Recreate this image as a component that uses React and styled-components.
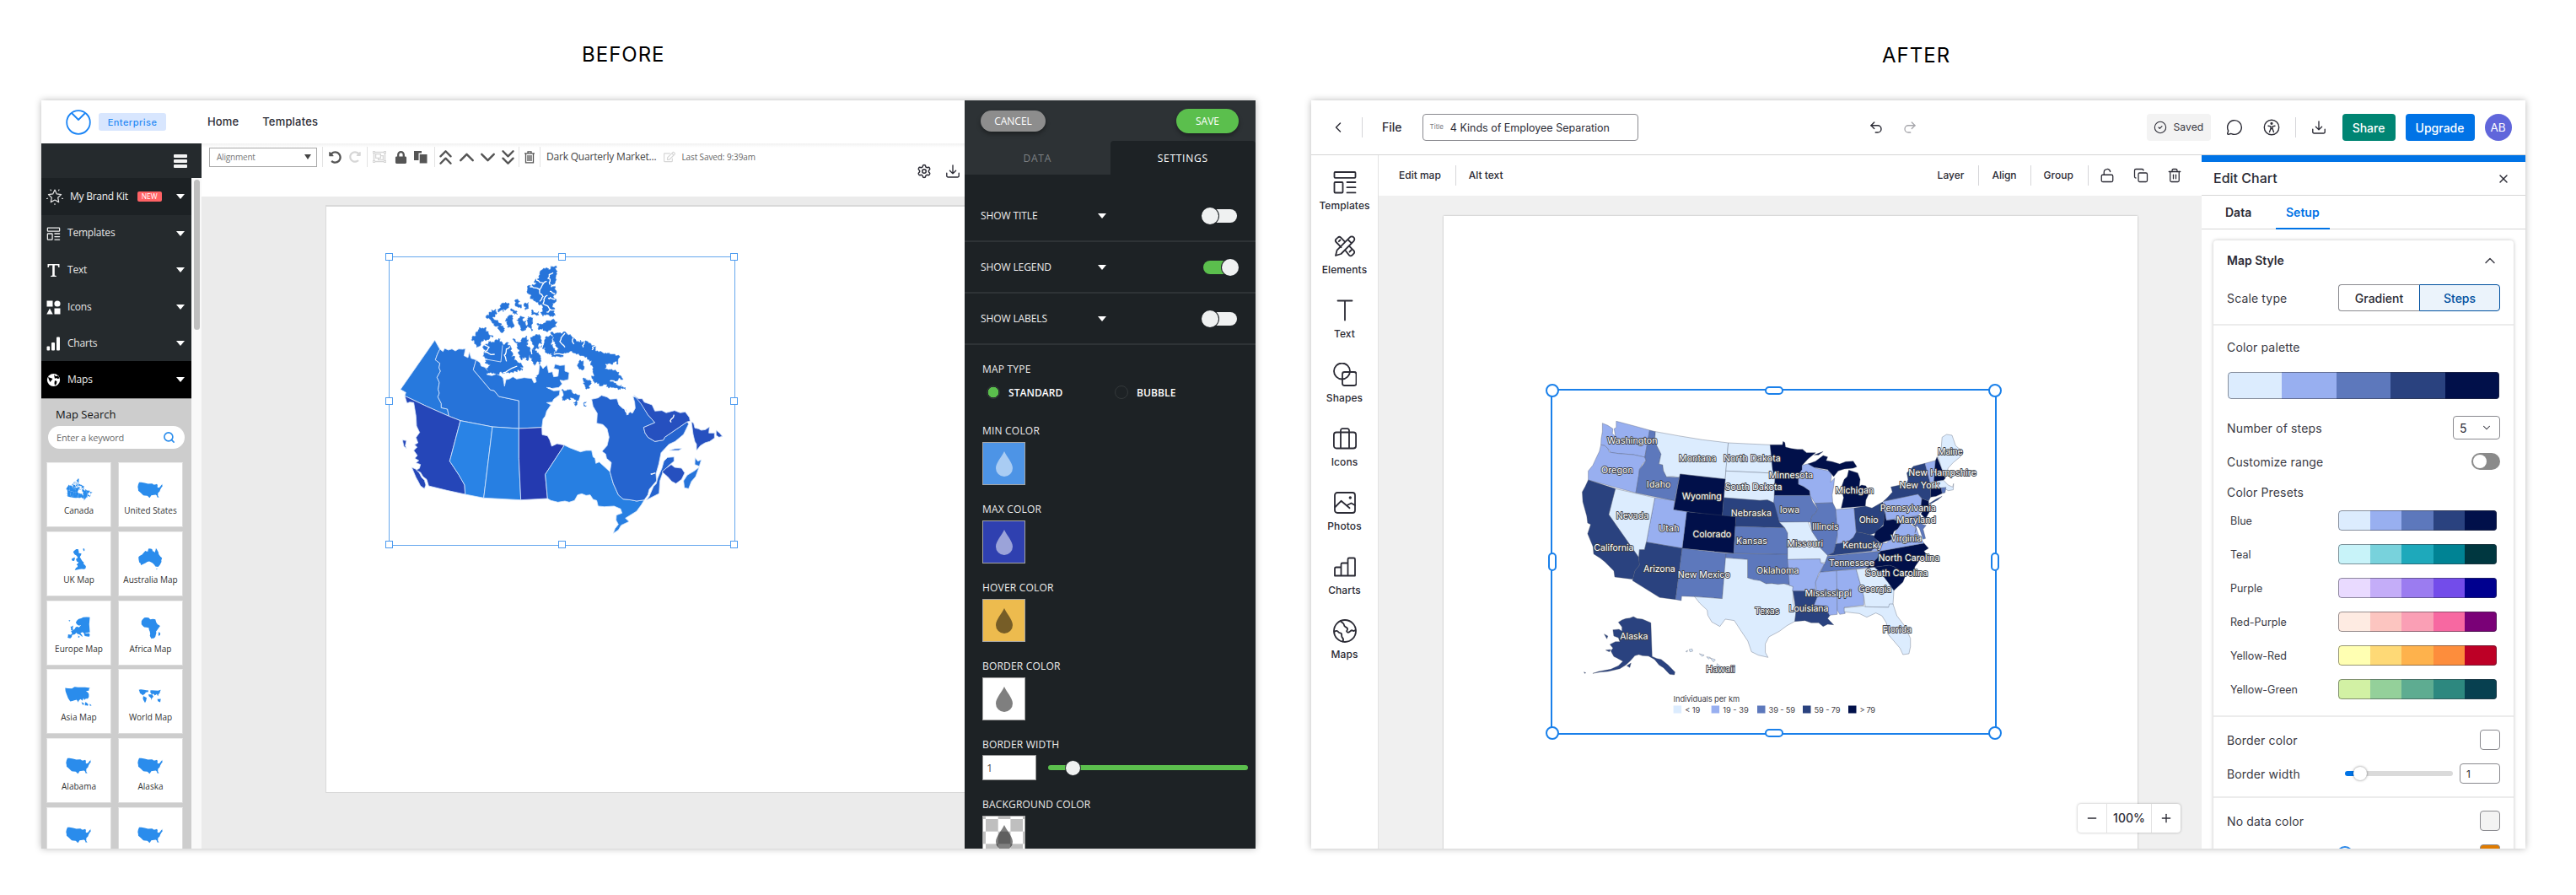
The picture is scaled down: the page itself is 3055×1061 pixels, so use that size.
import React from "react";
import styled, { createGlobalStyle, css } from "styled-components";
import {
  Undo2, Redo2, Trash2, Copy, MessageCircle, X, ChevronLeft, ChevronDown, ChevronUp,
  ChevronsUp, ChevronsDown, LockOpen, CircleCheck, Settings, Plus, Minus, Search,
} from "lucide-react";
import { FaLock, FaUndoAlt, FaRedoAlt, FaRegEdit, FaRegObjectGroup } from "react-icons/fa";

const Global = createGlobalStyle`
  * { box-sizing: border-box; }
  html, body { margin: 0; padding: 0; background: #fff; }
  body { font-family: Inter, "Liberation Sans", sans-serif; width: 3055px; height: 1061px; overflow: hidden; }
  svg { display: block; flex: none; }
`;

const INK = "#2b2b35";
const OPEN = `"Open Sans", "Noto Sans", sans-serif`;

/* ---------- shared ---------- */
const Board = styled.div`
  display: flex;
  gap: 66px;
  height: 1061px;
  padding-left: 49px;
`;
const Column = styled.section`
  width: 1440px;
  display: flex;
  flex-direction: column;
`;
const Heading = styled.div`
  height: 119px;
  padding: ${(p) => p.$pad};
  font-size: 24px;
  line-height: 30px;
  letter-spacing: ${(p) => p.$ls || "1px"};
  color: #000;
`;
const Frame = styled.div`
  width: 1440px;
  height: 887px;
  background: #fff;
  box-shadow: 0 0 8px rgba(0, 0, 0, 0.28);
  overflow: hidden;
  display: flex;
  flex-direction: ${(p) => (p.$column ? "column" : "row")};
`;
const Txt = styled.span`
  font-size: ${(p) => p.$size || 14}px;
  font-weight: ${(p) => p.$weight || 400};
  letter-spacing: ${(p) => p.$ls || 0}px;
  color: ${(p) => p.$color || INK};
  margin-left: ${(p) => p.$ml || 0}px;
  white-space: nowrap;
  line-height: 1.2;
`;
const Caret = styled.i`
  width: 0;
  height: 0;
  border-left: ${(p) => p.$w || 5}px solid transparent;
  border-right: ${(p) => p.$w || 5}px solid transparent;
  border-top: 6px solid ${(p) => p.$color || "#fff"};
  margin-left: ${(p) => p.$ml || "0"};
`;

/* ---------- before: shell ---------- */
const BMain = styled.div`
  width: 1095px;
  display: flex;
  flex-direction: column;
  font-family: ${OPEN};
`;
const BHeader = styled.header`
  height: 51px;
  display: flex;
  align-items: center;
  padding-left: 29px;
  font-family: Inter, sans-serif;
`;
const Badge = styled.span`
  margin-left: 9px;
  width: 80px;
  height: 21px;
  border-radius: 3px;
  background: #d8e6fe;
  color: #2a8bf5;
  font-size: 11px;
  font-weight: 500;
  letter-spacing: 0.45px;
  display: flex;
  align-items: center;
  justify-content: center;
`;
const BBody = styled.div`
  flex: 1;
  min-height: 0;
  display: flex;
`;
const BSidebar = styled.aside`
  width: 190px;
  background: #252a2d;
  display: flex;
  flex-direction: column;
`;
const BSideTop = styled.div`
  height: 41px;
  display: flex;
  align-items: center;
  justify-content: flex-end;
  padding-right: 17px;
`;
const Burger = styled.div`
  width: 16px;
  display: flex;
  flex-direction: column;
  gap: 2px;
  i { height: 4px; background: #f3f3f3; border-radius: 1px; }
`;
const BSideRow = styled.div`
  display: flex;
  flex: 1;
  min-height: 0;
`;
const BMenu = styled.div`
  width: 178px;
  display: flex;
  flex-direction: column;
`;
const ScrollTrack = styled.div`
  width: 12px;
  background: #f9f9f9;
  padding: 2px 2px 0 3px;
`;
const ScrollThumb = styled.div`
  width: 7px;
  height: 178px;
  border-radius: 4px;
  background: #bfbfbf;
`;
const MenuItem = styled.div`
  height: ${(p) => p.$h}px;
  flex: none;
  display: flex;
  align-items: center;
  padding: 0 8px 0 6px;
  background: ${(p) => p.$bg || "transparent"};
  svg { width: ${(p) => p.$iw || 17}px; }
`;
const NewTag = styled.span`
  margin-left: 11px;
  width: 29px;
  height: 12px;
  border-radius: 2px;
  background: #ff6265;
  color: #fff;
  font-size: 8.5px;
  line-height: 12px;
  text-align: center;
`;
const MapLib = styled.div`
  flex: 1;
  min-height: 0;
  overflow: hidden;
  background: #cdcdcd;
  border-top: 1px solid #8e8e8e;
  display: flex;
  flex-direction: column;
`;
const LibTitle = styled.div`
  height: 32px;
  flex: none;
  padding: 9px 0 0 17px;
  font-size: 13px;
  line-height: 18px;
  letter-spacing: 0;
  color: #111;
`;
const SearchField = styled.div`
  width: 162px;
  height: 27px;
  flex: none;
  margin-left: 8px;
  padding: 0 11px 0 10px;
  border-radius: 14px;
  background: #fff;
  display: flex;
  align-items: center;
  justify-content: space-between;
  font-size: 11px;
  letter-spacing: -0.2px;
  color: #6c6c6c;
`;
const Cards = styled.div`
  margin: 16px 0 0 6px;
  display: grid;
  grid-template-columns: 77px 77px;
  column-gap: 8px;
  row-gap: 4.8px;
  flex: none;
`;
const MapCard = styled.div`
  height: 77px;
  background: #fff;
  border: 1px solid #dcdcdc;
  border-top-color: #eee;
  display: flex;
  flex-direction: column;
  align-items: center;
  svg { margin-top: 18px; }
  span { margin-top: 4px; font-size: 10px; line-height: 14px; color: #333; white-space: nowrap; }
`;
const BWork = styled.div`
  flex: 1;
  display: flex;
  flex-direction: column;
  min-width: 0;
`;
const BToolbar = styled.div`
  height: 63px;
  display: flex;
  padding-left: 9px;
  background: linear-gradient(#f1f1f1, #fff 5px);
`;
const BTools = styled.div`
  height: 32px;
  display: flex;
  align-items: center;
  color: #555;
`;
const SelectBox = styled.div`
  width: 128px;
  height: 23px;
  border: 1px solid #a9a9a9;
  background: #fff;
  display: flex;
  align-items: center;
  justify-content: space-between;
  padding: 0 6px 0 8px;
  font-size: 10px;
  letter-spacing: -0.2px;
  color: #777;
`;
const ToolSep = styled.i`
  width: 1px;
  height: 24px;
  background: #e3e3e3;
  margin-left: ${(p) => p.$ml}px;
`;
const Tool = styled.span`
  width: 20px;
  height: 20px;
  margin-left: ${(p) => p.$ml}px;
  display: flex;
  align-items: center;
  justify-content: center;
  color: ${(p) => (p.$off ? "#d6d6d6" : "#555")};
`;
const BActions = styled.div`
  margin-left: auto;
  padding: 24px 5px 0 0;
  display: flex;
  gap: 16px;
`;
const BCanvas = styled.div`
  flex: 1;
  background: #ebebeb;
  padding: 10px 0 66px 147px;
`;
const BPage = styled.div`
  position: relative;
  height: 697px;
  background: #fff;
  border: 1px solid #d9d9d9;
  border-right: none;
  border-top-width: 2px;
`;

/* ---------- before: settings panel ---------- */
const BPanel = styled.aside`
  width: 345px;
  background: #1d2225;
  font-family: ${OPEN};
  color: #eee;
  overflow: hidden;
`;
const PanelTop = styled.div`
  height: 48px;
  background: #2d3235;
  display: flex;
  align-items: center;
  justify-content: space-between;
  padding: 0 20px 0 19px;
`;
const Pill = styled.span`
  width: ${(p) => p.$w}px;
  height: ${(p) => p.$h}px;
  border-radius: 15px;
  background: ${(p) => p.$bg};
  box-shadow: 0 3px 5px rgba(0, 0, 0, 0.35);
  font-size: 12px;
  letter-spacing: 0;
  color: #fff;
  display: flex;
  align-items: center;
  justify-content: center;
`;
const PanelTabs = styled.div`
  height: 40px;
  background: #2d3235;
  display: flex;
`;
const PanelTab = styled.div`
  width: 172.5px;
  display: flex;
  align-items: center;
  justify-content: center;
  font-size: 12px;
  letter-spacing: 0.75px;
  color: ${(p) => (p.$on ? "#fff" : "#7d8184")};
  background: ${(p) => (p.$on ? "#1d2225" : "transparent")};
  border-radius: 4px 4px 0 0;
`;
const ToggleList = styled.div`
  padding-top: 19px;
`;
const ToggleRow = styled.div`
  height: 61px;
  padding: 0 22px 0 19px;
  border-bottom: 2px solid #2e3336;
  display: flex;
  align-items: center;
`;
const RowName = styled.span`
  width: 139px;
  font-size: 12px;
  letter-spacing: -0.1px;
`;
const Switch = styled.span`
  margin-left: auto;
  width: 40px;
  height: 16px;
  border-radius: 8px;
  background: ${(p) => (p.$on ? "#5bbf4d" : "#eff1f1")};
  display: flex;
  align-items: center;
  justify-content: ${(p) => (p.$on ? "flex-end" : "flex-start")};
  i {
    flex: none;
    width: 20px;
    height: 20px;
    border-radius: 50%;
    background: #eff1f1;
    box-shadow: 0 0 0 1px #1d2225;
    margin: 0 ${(p) => (p.$on ? "-2px 0 0" : "0 0 -2px")};
  }
`;
const PanelForm = styled.div`
  padding: 20px 9px 0 21px;
`;
const PanelLabel = styled.div`
  height: 18px;
  margin-top: ${(p) => p.$mt || 0}px;
  font-size: 12px;
  line-height: 18px;
  letter-spacing: ${(p) => p.$ls || 0.2}px;
`;
const Radios = styled.div`
  margin-top: 8px;
  height: 20px;
  display: flex;
`;
const Radio = styled.div`
  width: 152px;
  padding-left: 5px;
  display: flex;
  align-items: center;
  gap: 10px;
  font-size: 12px;
  font-weight: 600;
  letter-spacing: ${(p) => (p.$on ? 0.05 : 0.1)}px;
  color: #fff;
  i {
    width: 16px;
    height: 16px;
    border-radius: 50%;
    border: 1px solid #34393b;
    background: ${(p) => (p.$on ? "radial-gradient(#5bbf4d 6px, #1d2225 6.6px)" : "transparent")};
  }
`;
const Swatch = styled.div`
  width: 51px;
  height: 51px;
  margin-top: 4px;
  border: 1px solid #a5a5a5;
  background: ${(p) => p.$bg};
  ${(p) => p.$checker && css`background-position: 3px 3px; background-size: 29.4px 29.4px;`}
  display: flex;
  align-items: center;
  justify-content: center;
`;
const WidthRow = styled.div`
  margin-top: 3px;
  height: 30px;
  display: flex;
  align-items: center;
  gap: 14px;
`;
const WidthInput = styled.div`
  width: 64px;
  height: 30px;
  background: #fff;
  border: 1px solid #999;
  color: #555;
  font-size: 13px;
  line-height: 28px;
  padding-left: 4px;
`;
const GreenRail = styled.div`
  width: 237px;
  height: 6px;
  border-radius: 3px;
  background: #5bbf4d;
  display: flex;
  align-items: center;
  padding-left: 20px;
  i { flex: none; width: 19px; height: 19px; border-radius: 50%; background: #eff1f1; border: 1px solid #1d2225; }
`;

/* ---------- selection handles (items on the free canvas) ---------- */
const OldSelection = styled.div`
  position: absolute;
  left: 74px;
  top: 59px;
  width: 411px;
  height: 343px;
  border: 1px solid #66a8ee;
`;
const OldHandle = styled.i`
  position: absolute;
  left: ${(p) => p.$x};
  top: ${(p) => p.$y};
  width: 9px;
  height: 9px;
  margin: -5px 0 0 -5px;
  background: #fff;
  border: 1px solid #4d9bf0;
`;
const MapLayer = styled.svg`
  position: absolute;
  left: ${(p) => p.$x}px;
  top: ${(p) => p.$y}px;
`;
const NewSelection = styled.div`
  position: absolute;
  left: 127px;
  top: 205px;
  width: 529px;
  height: 410px;
  border: 2px solid #1a80ea;
`;
const NewHandle = styled.i`
  position: absolute;
  left: ${(p) => p.$x};
  top: ${(p) => p.$y};
  width: ${(p) => p.$w}px;
  height: ${(p) => p.$h}px;
  transform: translate(-50%, -50%);
  background: #fff;
  border: 2px solid #1a80ea;
  border-radius: 8px;
`;

/* ---------- after: shell ---------- */
const AHeader = styled.header`
  height: 65px;
  border-bottom: 1px solid #d6d6d6;
  display: flex;
  align-items: center;
`;
const Sep = styled.i`
  width: 1px;
  height: 24px;
  background: #d6d6d9;
  margin-left: ${(p) => p.$ml}px;
`;
const Ico = styled.span`
  margin-left: ${(p) => p.$ml}px;
  color: ${(p) => p.$color || INK};
`;
const TitleInput = styled.div`
  margin-left: 24px;
  width: 256px;
  height: 32px;
  border: 1px solid #8a8a8f;
  border-radius: 4px;
  padding-left: 8px;
  display: flex;
  align-items: center;
`;
const SavedChip = styled.div`
  margin-left: 272px;
  width: 76px;
  height: 32px;
  border-radius: 4px;
  background: #f3f3f3;
  display: flex;
  align-items: center;
  padding-left: 8px;
`;
const Button = styled.div`
  margin-left: ${(p) => p.$ml}px;
  width: ${(p) => p.$w}px;
  height: 32px;
  border-radius: 4px;
  background: ${(p) => p.$bg};
  color: #fff;
  font-size: 14px;
  font-weight: 500;
  display: flex;
  align-items: center;
  justify-content: center;
`;
const Avatar = styled.div`
  margin-left: 12px;
  width: 32px;
  height: 32px;
  border-radius: 50%;
  background: #6066db;
  color: #fff;
  font-size: 13.5px;
  display: flex;
  align-items: center;
  justify-content: center;
`;
const ABody = styled.div`
  flex: 1;
  min-height: 0;
  display: flex;
`;
const ASidebar = styled.nav`
  width: 80px;
  border-right: 1px solid #e2e2e2;
  padding-top: 18px;
`;
const NavItem = styled.div`
  height: 76px;
  display: flex;
  flex-direction: column;
  align-items: center;
  color: ${INK};
  font-size: 12px;
  font-weight: 500;
  letter-spacing: 0.1px;
  svg { width: 28px; height: 28px; fill: none; stroke: currentColor; stroke-width: 1.8; stroke-linejoin: round; stroke-linecap: round; }
  span { margin-top: 6px; line-height: 15px; }
`;
const AWork = styled.div`
  width: 976px;
  display: flex;
  flex-direction: column;
`;
const AToolbar = styled.div`
  height: 48px;
  flex: none;
  display: flex;
  align-items: center;
`;
const ACanvas = styled.div`
  position: relative;
  flex: 1;
  background: #f0f0f0;
  padding: 24px 76px 0 77px;
  overflow: hidden;
`;
const APage = styled.div`
  position: relative;
  height: 900px;
  background: #fff;
  box-shadow: 0 0 2px rgba(0, 0, 0, 0.3);
`;
const ZoomBox = styled.div`
  position: absolute;
  left: 829px;
  top: 721px;
  width: 122px;
  height: 34px;
  background: #fff;
  border-radius: 4px;
  box-shadow: 0 0 3px rgba(0, 0, 0, 0.3);
  display: grid;
  grid-template-columns: 34px 54px 34px;
  align-items: center;
  justify-items: center;
  color: ${INK};
  span { width: 54px; text-align: center; border: solid #e2e2e2; border-width: 0 1px; line-height: 34px; font-size: 14px; font-weight: 500; }
`;

/* ---------- after: edit chart panel ---------- */
const APanel = styled.aside`
  width: 384px;
  display: flex;
  flex-direction: column;
  border-top: 8px solid #0073e6;
  background: #fff;
`;
const PanelTitle = styled.div`
  height: 40px;
  flex: none;
  border-bottom: 1px solid #d6d6d6;
  display: flex;
  align-items: center;
  justify-content: space-between;
  padding: 0 18px 0 14px;
`;
const Tabs = styled.div`
  height: 40px;
  flex: none;
  border-bottom: 1px solid #d6d6d6;
  display: flex;
  padding-left: 24px;
`;
const Tab = styled.div`
  width: 64px;
  height: 40px;
  border-bottom: 2px solid ${(p) => (p.$on ? "#0073e6" : "transparent")};
  color: ${(p) => (p.$on ? "#0073e6" : INK)};
  font-size: 14px;
  font-weight: 600;
  line-height: 39px;
  padding-left: ${(p) => (p.$on ? 12 : 4)}px;
`;
const PanelBody = styled.div`
  flex: 1;
  min-height: 0;
  overflow: hidden;
  padding: 13px 14px 0;
`;
const Card = styled.div`
  height: 760px;
  border-radius: 4px;
  box-shadow: 0 0 4px rgba(0, 0, 0, 0.25);
`;
const Section = styled.div`
  padding: 0 16px ${(p) => p.$pb || 0}px;
  border-bottom: 2px solid #ececec;
`;
const Field = styled.div`
  height: ${(p) => p.$h}px;
  margin-top: ${(p) => p.$mt || 0}px;
  padding: 0 ${(p) => p.$pad || 0}px;
  display: flex;
  align-items: center;
  justify-content: space-between;
  font-size: ${(p) => p.$size || 14}px;
  letter-spacing: ${(p) => (p.$size ? 0 : 0.15)}px;
  white-space: nowrap;
  color: #3a3a44;
`;
const CardHead = styled(Field)`
  padding-right: 2px;
`;
const Segments = styled.div`
  display: flex;
  width: 192px;
`;
const Segment = styled.div`
  width: 96px;
  height: 32px;
  border: 1px solid ${(p) => (p.$on ? "#00509f" : "#8a8a8f")};
  border-right-width: ${(p) => (p.$on ? 1 : 0)}px;
  border-radius: ${(p) => (p.$on ? "0 4px 4px 0" : "4px 0 0 4px")};
  background: ${(p) => (p.$on ? "#ebf3fb" : "#fff")};
  color: ${(p) => (p.$on ? "#00509f" : INK)};
  font-weight: 500;
  letter-spacing: 0;
  display: flex;
  align-items: center;
  justify-content: center;
`;
const Ramp = styled.div`
  width: ${(p) => p.$w}px;
  height: ${(p) => p.$h}px;
  margin: ${(p) => p.$m || 0};
  position: relative;
  display: flex;
  border-radius: 4px;
  overflow: hidden;
  &::after { content: ""; position: absolute; inset: 0; border: 1px solid rgba(50, 50, 60, 0.5); border-radius: 4px; }
`;
const RampCell = styled.i`
  flex: 1;
  background: ${(p) => p.$c};
`;
const Box = styled.div`
  width: ${(p) => p.$w}px;
  height: ${(p) => p.$h}px;
  border: 1px solid #8a8a8f;
  border-radius: 4px;
  background: ${(p) => p.$bg || "#fff"};
  padding: 0 8px 0 7px;
  display: flex;
  align-items: center;
  justify-content: space-between;
  color: ${INK};
  font-size: ${(p) => p.$size || 14}px;
`;
const GreySwitch = styled.div`
  width: 34px;
  height: 20px;
  border-radius: 10px;
  background: #8a8a8a;
  padding: 2px;
  i { display: block; width: 16px; height: 16px; border-radius: 50%; background: #fff; }
`;
const SliderRow = styled.div`
  display: flex;
  align-items: center;
  gap: 8px;
`;
const Rail = styled.div`
  width: 128px;
  height: 6px;
  border-radius: 3px;
  background: linear-gradient(90deg, #0073e6 16px, #dadada 16px);
  display: flex;
  align-items: center;
  padding-left: 10px;
  i { flex: none; width: 16px; height: 16px; border-radius: 50%; background: #fff; box-shadow: 0 0 3px rgba(0, 0, 0, 0.5); }
`;
const InfoRing = styled.i`
  width: 20px;
  height: 20px;
  margin: 0 auto 0 8px;
  border: 2px solid #2a87e8;
  border-radius: 50%;
`;

/* ---------- map geometry ---------- */
const rough = (pts, amp, depth = 3, closed = true) => {
  let p = pts.split(" ").map((s) => s.split(",").map(Number));
  let seed = 7 + Math.round(p[0][0]);
  const rnd = () => {
    seed = (seed * 16807) % 2147483647;
    return seed / 2147483647 - 0.5;
  };
  let a = amp;
  for (let d = 0; d < depth; d++) {
    const out = [];
    p.forEach((q, i) => {
      out.push(q);
      if (!closed && i === p.length - 1) return;
      const n = p[(i + 1) % p.length];
      const len = Math.hypot(n[0] - q[0], n[1] - q[1]);
      if (len > 5) {
        const k = Math.min(a, len * 0.5);
        out.push([(q[0] + n[0]) / 2 + rnd() * k * 2, (q[1] + n[1]) / 2 + rnd() * k * 2]);
      }
    });
    p = out;
    a *= 0.75;
  }
  return p.map((q) => q.map((v) => v.toFixed(1)).join(",")).join(" ");
};

const CANADA = [
  ["#2779dd", "227,370 245,402 236,420 229,440 245,452 242,468 247,480 235,502 243,520 239,545 243,558 238,572 250,595 250,610 272,615 277,640 200,606 120,568 124,556 105,545 112,535"],
  ["#2673d9", "245,402 256,410 262,399 275,405 288,401 300,408 312,401 326,402 336,400 331,425 345,432 350,412 356,434 374,440 364,475 425,547 438,549 455,570 526,585 526,684 432,678 318,656 277,640 272,615 250,610 250,595 238,572 243,558 239,545 243,520 235,502 247,480 242,468 245,452 229,440 236,420"],
  ["#2674da", "374,440 388,450 392,462 405,466 418,482 412,492 430,496 446,490 462,497 470,505 475,534 480,510 492,508 505,500 518,508 545,503 572,506 580,522 588,518 584,500 596,490 600,455 612,470 626,458 632,485 645,482 650,500 665,498 668,475 650,470 655,455 672,460 690,458 690,480 705,485 702,510 685,514 672,512 680,525 668,538 640,542 625,538 650,550 672,548 670,565 650,580 645,590 625,592 640,600 625,622 620,640 612,650 608,680 526,684 526,585 455,570 438,549 425,547 364,475"],
  ["#2546b8", "120,568 200,606 277,640 318,656 280,800 300,830 312,848 325,870 333,885 335,918 270,904 205,888 198,865 185,855 176,840 160,832 172,826 176,812 160,806 170,798 156,790 165,780 152,762 164,750 155,742 167,735 160,716 173,698 162,675 160,640 152,592 138,590 128,594"],
  ["#2546b8", "145,822 158,828 172,842 180,858 190,868 195,885 190,898 176,888 168,872 160,858"],
  ["#2546b8", "112,725 126,727 122,745 126,755 117,748"],
  ["#2983e6", "318,656 432,678 401,931 335,918 333,885 312,848 300,830 280,800"],
  ["#277fe2", "432,678 526,684 526,790 533,938 401,931"],
  ["#243ab0", "526,684 608,680 609,706 628,710 636,725 643,747 662,738 688,743 620,847 628,933 533,938 526,790"],
  ["#277fe2", "688,743 706,752 745,767 765,762 785,762 790,785 797,790 800,808 812,803 822,812 850,838 862,880 880,920 897,935 925,938 945,942 972,938 962,955 945,978 905,1003 918,1015 890,1028 880,1045 862,1057 868,1040 880,1025 872,1010 873,992 893,985 888,970 865,960 830,962 808,960 803,940 790,936 780,920 765,922 750,916 735,920 724,940 705,946 690,942 665,946 640,940 628,933 620,847"],
  ["#2564cf", "785,580 808,575 820,566 840,572 850,580 875,578 882,600 895,612 908,618 910,636 922,625 930,630 940,612 938,590 932,570 950,575 968,605 985,635 1010,663 970,680 975,700 985,715 1010,730 1040,725 1045,715 1125,660 1130,668 1112,705 1082,730 1060,740 1032,770 1024,810 1014,845 1016,870 990,900 985,920 972,938 945,942 925,938 897,935 880,920 862,880 850,838 855,805 838,790 835,775 822,765 840,745 847,715 840,685 825,670 803,665 805,630 790,605"],
  ["#2564cf", "1078,785 1055,787 1042,800 1035,825 1020,860 1015,880 1005,890 990,925 980,938 1025,915 1028,870 1040,835 1060,815 1078,800"],
  ["#2650bf", "1035,838 1050,825 1068,812 1080,822 1105,825 1116,842 1105,865 1085,880 1070,872 1055,855"],
  ["#2674da", "1115,895 1112,870 1125,850 1150,835 1167,822 1155,855 1140,872 1130,898"],
  ["#2674da", "1153,788 1163,800 1175,795 1168,818 1152,812"],
  ["#2564cf", "1062,762 1080,756 1105,755 1095,762"],
  ["#2650bf", "935,565 950,578 965,578 972,590 1000,600 1010,622 1035,620 1050,628 1080,620 1100,628 1118,625 1133,645 1135,658 1125,660 1045,715 1040,725 1010,730 985,715 975,700 970,680 1010,663 985,635 960,595"],
  ["#2650bf", "1140,660 1148,665 1152,682 1165,685 1175,690 1190,688 1204,678 1202,700 1222,700 1222,718 1205,730 1188,735 1172,745 1158,762 1158,740 1152,730 1146,705"],
  ["#2650bf", "1228,690 1240,700 1250,712 1238,715 1228,708"],
];
const ISLANDS = [
  "660,106 640,106 618,118 600,138 584,155 590,170 565,175 556,200 566,222 585,232 598,245 612,255 604,270 612,285 640,285 655,282 650,262 655,235 648,215 655,190 656,150",
  "385,325 405,325 418,340 435,356 412,368 395,372 390,385 376,396 368,382 358,370 372,350",
  "400,398 418,380 440,372 460,366 468,385 490,380 500,400 500,428 522,450 540,462 538,478 510,480 495,486 478,484 450,490 415,488 410,470 425,455 405,450 412,435 402,420",
  "505,365 520,375 540,362 560,368 556,392 566,420 560,440 545,430 535,440 525,412 522,392",
  "572,410 590,408 602,430 600,455 582,460 572,440",
  "575,360 600,350 605,375 598,400 582,405 575,385",
  "620,365 640,350 645,372 650,400 658,412 635,420 618,405 615,385",
  "590,312 612,320 625,300 650,295 662,305 660,322 640,332 612,335 595,330",
  "640,348 660,345 690,340 702,352 720,362 742,378 760,376 780,380 800,392 808,410 838,418 862,420 880,424 878,455 862,448 835,452 832,468 858,475 882,484 895,510 872,515 850,512 875,528 905,545 875,540 845,540 820,530 795,522 785,500 790,470 785,442 760,428 735,418 715,408 695,415 682,430 655,430 640,422 660,410 655,380",
  "680,545 700,548 715,555 725,562 742,565 738,585 722,575 708,570 696,582 684,585",
  "755,505 775,512 778,530 764,538 756,525",
  "740,448 755,450 758,468 745,472",
  "722,592 732,586 728,604",
  "760,590 766,590 764,606",
  "410,285 425,270 445,262 448,275 430,290 445,300 470,320 475,335 455,332 440,318 430,305",
  "460,250 485,240 488,255 470,268 455,270",
  "512,228 530,232 535,248 520,250",
  "545,240 560,236 560,258 548,258",
  "490,285 500,282 505,308 500,328 485,322 478,300",
  "520,300 545,290 550,310 552,332 532,330",
  "560,285 576,290 574,312 575,335 562,325 556,300",
  "500,258 520,268 522,278 505,275",
  "575,262 596,268 590,282 570,278",
];
const INLETS = [
  "565,180 600,190 625,160", "600,188 612,215 600,232", "648,130 630,150 636,172", "628,210 612,240 640,262", "655,225 630,220",
  "400,380 420,395 405,415", "408,412 440,420", "495,392 478,420 482,445", "650,420 700,418", "690,345 672,375 690,395",
  "835,455 865,470", "850,515 905,520", "630,438 665,445 690,430", "470,486 520,462", "545,476 590,500", "600,350 640,348",
  "612,378 606,430", "565,350 572,420", "630,540 672,545", "1078,635 1068,662", "905,600 915,635",
  "995,845 1012,842", "612,470 616,430", "590,150 612,166", "640,180 655,176", "720,362 722,384", "760,376 756,394", "800,392 786,404",
  "655,205 636,196", "655,262 625,270",
];

const CanadaShape = ({ flat }) => (
  <g>
    {CANADA.map(([c, p], i) => (
      <polygon key={i} points={p} fill={flat || c} stroke={flat ? flat : "#dbe8fb"} strokeWidth={flat ? 1 : 2.4} strokeLinejoin="round" />
    ))}
    {ISLANDS.map((p, i) => (
      <polygon key={i} points={rough(p, 8, 4)} fill={flat || "#2674da"} stroke={flat || "#2674da"} strokeWidth="1.5" />
    ))}
    {!flat && INLETS.map((p, i) => <polyline key={i} points={rough(p, 5, 2, false)} fill="none" stroke="#fff" strokeWidth="4" />)}
    {!flat && <polyline points="405,437 462,447 468,388" fill="none" stroke="#dbe8fb" strokeWidth="2.6" />}
  </g>
);

const A = "#dcecfe", B = "#98aff0", C = "#5d78bc", D = "#2a427f", E = "#01104a";
const STATES = [
  [B, "197,185 215,193 232,205 230,222 240,232 236,205 243,200 243,178 300,194 354,210 338,306 300,297 250,293 225,290 215,275 205,265 192,262 193,240 197,215"],
  [B, "192,262 205,265 215,275 220,288 250,293 300,297 338,306 342,318 330,330 320,350 318,370 308,433 150,387 150,355 165,335 178,305 187,285"],
  [C, "354,210 373,215 371,250 380,270 392,295 385,330 397,333 400,355 410,376 447,378 453,372 437,461 308,433 318,370 320,350 342,318 338,306"],
  [A, "373,215 450,230 530,244 615,255 605,384 455,366 453,378 430,374 410,376 400,355 397,333 385,330 392,295 380,270 371,250"],
  [A, "615,255 754,262 760,310 765,363 607,355"],
  [A, "607,355 765,363 770,380 768,440 770,470 745,458 720,460 600,450"],
  [E, "455,366 605,384 595,517 433,493"],
  [D, "600,450 720,460 745,458 770,470 777,500 785,537 803,557 638,552 640,518 595,517"],
  [E, "477,500 640,518 633,648 462,630"],
  [B, "371,450 437,461 433,493 477,500 462,630 343,608"],
  [A, "240,418 371,450 343,608 337,635 320,635 318,663 218,510"],
  [D, "150,387 240,418 218,510 318,663 320,690 305,710 298,740 238,732 235,710 205,678 190,665 168,650 166,625 148,578 158,545 148,540 145,515 132,465 130,430 140,410"],
  [D, "343,608 462,630 440,812 387,805 297,745 305,710 320,690 318,663 320,635 337,635"],
  [C, "462,630 608,648 595,809 503,802 460,800 459,816 440,812"],
  [C, "638,552 803,557 812,575 812,652 633,648"],
  [C, "608,648 812,652 818,760 800,756 780,758 760,755 740,756 720,745 700,742 679,735 679,670 606,664"],
  [A, "606,664 679,670 679,735 700,742 720,745 740,756 760,755 780,758 800,756 830,766 830,820 840,855 836,890 810,905 785,925 750,945 738,970 738,1000 747,1018 715,1010 692,998 680,960 655,920 635,887 605,882 587,908 560,892 547,868 545,850 520,825 503,802 595,809"],
  [E, "754,262 795,262 797,250 803,254 805,270 825,275 845,278 862,278 875,290 905,290 880,312 860,335 860,350 848,370 848,402 865,410 885,425 887,442 768,442 770,380 762,350"],
  [C, "768,442 887,442 895,465 912,490 905,505 893,515 888,537 785,537 775,500 766,465"],
  [A, "785,537 880,536 893,570 912,600 918,625 945,655 938,680 920,682 920,668 812,670 812,575 803,557"],
  [B, "812,670 920,668 922,682 935,685 915,720 905,750 905,782 828,782 830,766 818,762"],
  [D, "830,782 905,782 910,805 900,832 940,835 938,855 955,865 945,880 965,902 945,900 930,908 915,895 890,895 870,887 836,890 840,855"],
  [B, "860,335 885,328 895,335 905,345 950,355 958,370 955,395 968,380 965,410 960,440 962,468 903,470 887,442 885,425 865,410 848,402 848,370 860,350"],
  [C, "903,470 962,468 972,490 978,580 972,615 965,645 945,655 918,625 912,600 893,570 888,537 893,515 905,505 912,490"],
  [E, "880,330 905,320 930,300 945,305 940,318 960,322 985,330 1005,322 1030,320 1042,340 1030,345 1000,348 980,355 965,375 955,362 945,350 900,342"],
  [E, "900,298 930,286 915,298"],
  [E, "1015,352 1045,362 1053,385 1050,410 1058,405 1072,408 1082,435 1072,458 1070,480 990,487 998,450 990,415 1000,385 1010,375"],
  [B, "972,492 1033,487 1040,575 1030,592 1010,608 975,615 978,580"],
  [D, "1033,487 1070,480 1092,487 1128,465 1135,510 1130,545 1105,575 1085,582 1060,575 1040,572"],
  [D, "945,655 965,645 972,615 1010,608 1030,592 1040,572 1060,575 1085,582 1098,585 1115,612 1090,640 960,655"],
  [C, "935,685 945,658 1120,640 1110,665 1075,700 920,715"],
  [B, "920,715 975,710 977,865 950,868 940,835 900,832 910,805 905,750"],
  [B, "975,710 1040,705 1065,800 1065,832 1000,840 1003,862 985,865 977,850"],
  [A, "1040,705 1100,697 1120,715 1145,750 1165,780 1162,830 1147,840 1070,838 1065,800"],
  [A, "1000,842 1065,835 1070,838 1147,840 1150,828 1162,828 1175,870 1200,905 1220,950 1220,980 1215,1005 1195,1008 1185,985 1165,960 1145,935 1140,895 1125,870 1105,860 1075,875 1050,862 1000,856"],
  [E, "1100,697 1150,690 1165,695 1205,722 1195,750 1165,780 1145,750 1120,715"],
  [E, "1075,700 1110,665 1120,640 1265,612 1280,630 1265,640 1275,655 1250,672 1235,695 1228,722 1205,725 1165,695 1150,690 1100,697"],
  [B, "1090,640 1115,612 1140,612 1165,585 1175,560 1195,530 1215,540 1240,560 1250,590 1265,612 1120,640"],
  [E, "1135,500 1140,530 1165,527 1190,540 1178,560 1165,570 1155,600 1120,612 1098,590 1105,570 1130,550"],
  [C, "1165,528 1252,513 1260,545 1272,548 1262,562 1270,595 1262,598 1250,560 1240,548 1235,575 1240,560 1225,540 1190,540"],
  [B, "1130,463 1245,437 1258,455 1255,480 1262,492 1245,513 1140,530"],
  [E, "1258,453 1280,462 1283,500 1270,525 1255,508 1262,492 1255,480"],
  [D, "1143,450 1160,430 1155,412 1185,405 1208,400 1212,385 1208,362 1230,338 1268,328 1285,395 1287,448 1280,462 1258,453 1245,437 1130,463"],
  [D, "1283,470 1305,455 1325,445 1310,458 1290,470"],
  [B, "1268,328 1303,318 1298,392 1285,395"],
  [E, "1303,318 1308,305 1325,350 1336,380 1330,388 1298,392"],
  [A, "1310,300 1322,275 1325,235 1340,225 1358,228 1370,265 1395,288 1385,305 1362,325 1345,345 1336,380 1325,350"],
  [A, "1285,395 1330,388 1345,405 1360,412 1363,400 1362,422 1345,425 1330,415 1287,418"],
  [E, "1287,418 1322,415 1325,435 1305,445 1287,448"],
  [C, "1322,415 1338,413 1335,432 1325,435"],
  [D, "250,893 262,885 275,880 288,878 300,873 312,880 330,882 358,895 362,1015 378,1022 392,1025 415,1045 438,1070 436,1080 420,1078 400,1055 385,1045 370,1025 350,1013 330,1012 318,1008 305,1012 290,1030 275,1045 255,1058 240,1062 215,1068 190,1070 165,1075 185,1068 225,1060 250,1048 265,1032 245,1020 235,1015 225,995 232,985 222,972 240,962 255,962 250,948 235,942 232,920 252,918 262,925 262,910"],
  [D, "203,935 215,942 212,952"], [D, "208,992 225,990 220,998"], [D, "278,1048 292,1038 288,1054"], [D, "136,1070 142,1073 138,1075"],
  [A, "474,997 480,993 478,999"], [A, "485,990 495,988 497,996 488,998"], [A, "519,1005 535,1010 528,1014"],
  [A, "543,1016 555,1018 550,1024"], [A, "555,1020 572,1026 566,1034"], [A, "578,1040 598,1058 585,1075 576,1060"],
];
const LABELS = [
  ["Washington", 296, 247, 167], ["Oregon", 246, 353, 106], ["Idaho", 384, 403, 80], ["Montana", 513, 309, 124],
  ["North Dakota", 694, 311, 190], ["South Dakota", 699, 412, 190], ["Wyoming", 527, 445, 132], ["Nevada", 297, 515, 108],
  ["Utah", 418, 558, 68], ["Colorado", 561, 579, 128], ["California", 235, 628, 132], ["Arizona", 386, 703, 106],
  ["New Mexico", 534, 725, 174], ["Nebraska", 691, 505, 135], ["Kansas", 693, 605, 103], ["Oklahoma", 779, 709, 141],
  ["Texas", 744, 852, 82], ["Minnesota", 823, 369, 147], ["Iowa", 819, 492, 66], ["Missouri", 870, 613, 120],
  ["Illinois", 938, 552, 88], ["Michigan", 1034, 425, 128], ["Ohio", 1081, 529, 64], ["Kentucky", 1061, 618, 132],
  ["Tennessee", 1025, 682, 151], ["Mississippi", 947, 790, 155], ["Louisiana", 882, 843, 131], ["Georgia", 1102, 774, 110],
  ["Florida", 1176, 920, 96], ["South Carolina", 1174, 719, 208], ["North Carolina", 1215, 664, 204], ["Virginia", 1206, 595, 104],
  ["Maryland", 1239, 528, 132], ["Pennsylvania", 1212, 486, 185], ["New York", 1250, 405, 134], ["New Hampshire", 1326, 360, 226],
  ["Maine", 1352, 287, 83], ["Alaska", 302, 943, 93], ["Hawaii", 589, 1060, 96],
];
const LEGEND = [[154.6, "< 19", A, 18], [199.6, "19 - 39", B, 30.5], [254, "39 - 59", C, 31.5], [308, "59 - 79", D, 31], [362, "> 79", E, 18.5]];

const UsaMap = () => (
  <MapLayer $x={118} $y={184} width="560" height="450" viewBox="0 0 560 450">
    <g transform="scale(0.357143 0.333333)">
      {STATES.map(([c, p], i) => (
        <polygon key={i} points={p} fill={c} stroke="#4a5368" strokeOpacity="0.6" strokeWidth="1.7" strokeLinejoin="round" />
      ))}
    </g>
    <g fontFamily="Inter, sans-serif" fontSize="10.6" fontWeight="400" fill="#fff" stroke="#3c3f48" strokeWidth="1.8" strokeLinejoin="round" paintOrder="stroke">
      {LABELS.map(([t, x, y, w]) => (
        <text key={t} x={x / 2.8 - w / 5.6} y={y / 3 + 3.7} textLength={w / 2.8}>{t}</text>
      ))}
    </g>
    <g fontFamily="Inter, sans-serif" fontSize="9.3" fill="#3f4047">
      <text x="154.6" y="392" textLength="78.5">Individuals per km</text>
      {LEGEND.map(([x, t, c, w]) => (
        <g key={t}>
          <rect x={x} y="396.5" width="9.5" height="9" fill={c} />
          <text x={x + 13.6} y="404.6" textLength={w}>{t}</text>
        </g>
      ))}
    </g>
  </MapLayer>
);

/* ---------- thumbnail maps ---------- */
const BLUE = "#2a8cec";
const usMini = "405,160 425,162 450,164 456,168 468,166 470,176 478,178 490,164 488,174 480,186 472,198 476,214 470,214 464,204 448,206 442,215 434,208 420,206 402,190 400,176";
const THUMBS = {
  us: ["396 148 98 76", [usMini]],
  uk: ["141 390 98 82", ["178,398 188,396 190,410 200,412 194,424 204,440 208,450 216,458 210,468 194,468 176,472 186,460 182,452 190,444 180,432 186,424 176,416 170,406", "166,430 176,426 174,438 166,436", "206,398 210,394 209,404"]],
  au: ["393 390 98 82", ["399,425 412,416 424,402 434,404 436,394 448,396 450,404 458,408 462,393 468,402 472,414 484,428 482,442 470,460 460,458 450,446 438,440 424,446 408,454 402,444", "462,465 469,465 465,471"]],
  eu: ["141 636 98 82", ["230,638 230,692 214,694 220,704 210,700 204,692 196,696 204,710 192,700 182,694 166,702 160,714 150,712 152,700 166,698 162,688 176,680 184,672 192,674 200,662 194,668 184,664 180,656 190,644 206,638", "160,672 170,668 170,686 162,684", "152,648 160,648 158,654", "210,696 228,696 228,708 212,706", "186,702 194,708 188,712"]],
  af: ["393 636 98 82", ["410,652 420,640 436,640 442,646 460,646 468,664 477,670 468,682 462,690 462,700 454,714 446,716 440,704 440,690 436,676 420,674 410,664", "472,692 478,696 472,706"]],
  as: ["141 886 98 76", ["142,894 166,896 176,890 200,892 230,894 226,904 216,906 226,916 222,932 212,936 208,930 204,940 196,934 188,946 182,936 174,938 160,942 152,930 146,914", "200,944 210,950 204,954", "214,944 222,950 222,958 212,956", "230,950 236,956 230,957"]],
  wo: ["396 890 98 66", ["404,900 422,900 438,902 432,908 426,914 420,920 408,912", "420,922 432,928 426,946 420,936", "444,902 460,902 482,900 478,912 472,922 468,914 460,920 456,914 448,914 444,908", "438,916 452,916 456,924 448,938 444,926", "470,932 482,932 480,944 472,940"]],
};
const Thumb = ({ k }) =>
  k === "ca" ? (
    <svg width="32" height="27" viewBox="90 95 1170 980"><CanadaShape flat={BLUE} /></svg>
  ) : (
    <svg width="32.7" height="27" viewBox={THUMBS[k][0]}>
      {THUMBS[k][1].map((p, i) => <polygon key={i} points={rough(p, 2.2, 1)} fill={BLUE} />)}
    </svg>
  );
const CARDS = [
  ["ca", "Canada"], ["us", "United States"], ["uk", "UK Map"], ["au", "Australia Map"], ["eu", "Europe Map"], ["af", "Africa Map"],
  ["as", "Asia Map"], ["wo", "World Map"], ["us", "Alabama"], ["us", "Alaska"], ["us", ""], ["us", ""],
];

/* ---------- icons ---------- */
const TemplatesIcon = ({ s = 28, c = "currentColor", w = 1.9 }) => (
  <svg width={s} height={s} viewBox="0 0 28 28" fill="none" stroke={c} strokeWidth={w} strokeLinecap="round" strokeLinejoin="round">
    <rect x="1.500" y="2" width="25" height="6.800" rx="1" /><rect x="1.500" y="14" width="10" height="12.500" rx="1" />
    <path d="M16.500 14h10M16.500 20.200h10M16.500 26.400h10" />
  </svg>
);
const DownloadIcon = ({ s, w = 1.6 }) => (
  <svg width={s} height={s} viewBox="0 0 20 20" fill="none" stroke={INK} strokeWidth={w} strokeLinecap="round" strokeLinejoin="round">
    <path d="M10 2v11M6 9.200l4 4 4-4M2 12.500v3.500a1.800 1.800 0 0 0 1.800 1.800h12.400A1.800 1.800 0 0 0 18 16v-3.500" />
  </svg>
);
const NAV = [
  ["Templates", <TemplatesIcon key="i" />],
  ["Elements", <svg key="i" viewBox="0 0 28 28"><path d="M3 25l1.600-6.400L19.800 3.400a3 3 0 0 1 4.600 0 3 3 0 0 1 0 4.400L9.400 23 3 25zM17.500 6l4.400 4.400M9.600 15.200L3.600 9a2.600 2.600 0 0 1 0-3.600L5.600 3.600a2.600 2.600 0 0 1 3.600 0L14 8.600M8.500 6.500L6.800 8.200M19.500 14.200l5 5a2.400 2.400 0 0 1 0 3.400l-2 2a2.400 2.400 0 0 1-3.400 0L14.600 19M21.500 18.500l-2 2" /></svg>],
  ["Text", <svg key="i" viewBox="0 0 28 28"><path d="M5.500 2.500h17M14 2.500v23" /></svg>],
  ["Shapes", <svg key="i" viewBox="0 0 28 28"><circle cx="10.500" cy="10" r="9.500" /><rect x="11" y="11" width="16.500" height="16" rx="2.500" /></svg>],
  ["Icons", <svg key="i" viewBox="0 0 28 28"><rect x="0.900" y="6.500" width="26.200" height="19" rx="3" /><path d="M9 25V4.200A2 2 0 0 1 11 2.200h6a2 2 0 0 1 2 2V25" /></svg>],
  ["Photos", <svg key="i" viewBox="0 0 28 28"><rect x="2" y="2" width="24" height="24" rx="3" /><path d="M2.500 19l7-7.200 10 8.500M16.500 17l5-2.500L26 17" /><circle cx="20.300" cy="8" r="0.800" fill="currentColor" /></svg>],
  ["Charts", <svg key="i" viewBox="0 0 28 28"><path d="M2 24.500V16a1.500 1.500 0 0 1 1.500-1.500H9.500M9.500 24.500V11a1.500 1.500 0 0 1 1.500-1.500h6.500M17.500 24.500V5A1.500 1.500 0 0 1 19 3.500h5.500A1.500 1.500 0 0 1 26 5v19.500z M2 24.500h24" /></svg>],
  ["Maps", <svg key="i" viewBox="0 0 28 28"><circle cx="14" cy="14" r="13" /><path d="M1.500 15c2-2 4-1 5 .5s3 0 3.500 2-.5 3 1 4.500 1 3.500.5 4.500M9 2c1 2.500 4 2.500 4 5s3 2 4 4-2.500 3 0 4.500 4-3.500 6-2 2.500-.5 3.500-.5" /></svg>],
];
const Droplet = ({ c }) => (
  <svg width="20" height="30" viewBox="0 0 20 30"><path d="M10 0C12.500 6 20 13.500 20 20a10 10 0 0 1-20 0C0 13.500 7.500 6 10 0z" fill={c} /></svg>
);
const SWATCHES = [
  ["MIN COLOR", "#4d94e6", "rgba(255,255,255,.52)"],
  ["MAX COLOR", "#2f40b0", "rgba(255,255,255,.52)"],
  ["HOVER COLOR", "#edbb4e", "rgba(0,0,0,.5)"],
  ["BORDER COLOR", "#fff", "rgba(0,0,0,.5)"],
];
const MENU = [
  ["Templates", 43, <TemplatesIcon key="i" s={16} c="#eee" w={2.2} />],
  ["Text", 44, <svg key="i" height="17" viewBox="0 0 17 17"><path d="M1.500 1h14v4h-1.200l-.8-2.500H9.800V14.500l2 .6V16H5.200v-.9l2-.6V2.500H3.500L2.700 5H1.500z" fill="#fff" /></svg>],
  ["Icons", 44, <svg key="i" height="17" viewBox="0 0 17 17" fill="#fff"><rect x="0.500" y="0.500" width="7" height="7" /><circle cx="13" cy="4" r="3.600" /><path d="M4 9.500l3.700 7H.300z" /><rect x="9.500" y="9.500" width="7" height="7" /></svg>],
  ["Charts", 42, <svg key="i" height="17" viewBox="0 0 17 17" fill="#fff"><rect x="0.500" y="11.500" width="3.600" height="5" rx="1" /><rect x="6" y="7" width="4" height="9.500" rx="1" /><rect x="12" y="0.500" width="4" height="16" rx="1" /></svg>],
];
const RAMP = [A, B, C, D, E];
const PRESETS = [
  ["Blue", RAMP],
  ["Teal", ["#c8f3f9", "#78d2dc", "#1ea9bb", "#008394", "#003740"]],
  ["Purple", ["#e9daff", "#c4adf8", "#9b7cf0", "#734cea", "#00008f"]],
  ["Red-Purple", ["#feebe2", "#fcc5c0", "#fa9fb5", "#f768a1", "#7a0177"]],
  ["Yellow-Red", ["#ffffb2", "#fed976", "#feb24c", "#fd8d3c", "#bd0026"]],
  ["Yellow-Green", ["#d2f1a4", "#94d09a", "#5eac91", "#2d887f", "#074050"]],
];
const Colors = ({ w, h, m, list }) => (
  <Ramp $w={w} $h={h} $m={m}>{list.map((c) => <RampCell key={c} $c={c} />)}</Ramp>
);
const XY = ["0%", "50%", "100%"];
const GRID = XY.flatMap((y) => XY.map((x) => [x, y])).filter(([x, y]) => !(x === "50%" && y === "50%"));

/* ---------- screens ---------- */
const Before = () => (
  <Frame>
    <BMain>
      <BHeader>
        <svg width="30" height="30" viewBox="0 0 30 30" fill="none" stroke="#1a84f5" strokeWidth="1.800">
          <circle cx="15" cy="15" r="13.800" /><path d="M7 4l8 8 8-8" strokeLinejoin="round" />
        </svg>
        <Badge>Enterprise</Badge>
        <Txt $size={13} $weight={500} $ml={49} $ls={0.1}>Home</Txt>
        <Txt $size={13} $weight={500} $ml={28} $ls={0.2}>Templates</Txt>
      </BHeader>
      <BBody>
        <BSidebar>
          <BSideTop><Burger><i /><i /><i /></Burger></BSideTop>
          <BSideRow>
            <BMenu>
              <MenuItem $h={44} $bg="#1c2124" $iw={20}>
                <svg height="20" viewBox="0 0 20 20" fill="none" stroke="#e4e4e4" strokeWidth="1.200" strokeLinejoin="round">
                  <path d="M10 2l2.300 4.900 5.300.7-3.900 3.700 1 5.300L10 14l-4.700 2.600 1-5.300-3.900-3.700 5.300-.7z" />
                  <path d="M5 2l.5.800M15 2l-.5.800M.5 12.500l1-.3M19.500 12.500l-1-.3M10 18.500v1" strokeLinecap="round" />
                </svg>
                <Txt $size={12} $color="#f2f2f2" $ml={8} $ls={-0.25}>My Brand Kit</Txt>
                <NewTag>NEW</NewTag>
                <Caret $ml="auto" />
              </MenuItem>
              {MENU.map(([t, h, icon]) => (
                <MenuItem key={t} $h={h}>{icon}<Txt $size={12} $color="#e8e8e8" $ml={8} $ls={-0.2}>{t}</Txt><Caret $ml="auto" /></MenuItem>
              ))}
              <MenuItem $h={44} $bg="#000">
                <svg height="17" viewBox="0 0 17 17"><circle cx="8.500" cy="8.500" r="7.600" fill="#fff" /><path d="M2 5l3 1 2.500 1L6 9l-1.500 2L3 8zM9 2l2 2 3-.5 1.500 3-2 .5-2-1-1.500 1zM10 9l2.500 1L12 13l-2 2-.5-3z" fill="#000" /></svg>
                <Txt $size={12} $color="#e8e8e8" $ml={8} $ls={-0.2}>Maps</Txt><Caret $ml="auto" />
              </MenuItem>
              <MapLib>
                <LibTitle>Map Search</LibTitle>
                <SearchField>Enter a keyword<Search size={15} color={BLUE} strokeWidth={2.600} /></SearchField>
                <Cards>
                  {CARDS.map(([k, t], i) => <MapCard key={i}><Thumb k={k} /><span>{t}</span></MapCard>)}
                </Cards>
              </MapLib>
            </BMenu>
            <ScrollTrack><ScrollThumb /></ScrollTrack>
          </BSideRow>
        </BSidebar>
        <BWork>
          <BToolbar>
            <BTools>
              <SelectBox>Alignment<Caret $w={4} $color="#444" /></SelectBox>
              <ToolSep $ml={6} />
              <Tool $ml={4}><FaUndoAlt size={15} /></Tool>
              <Tool $ml={4} $off><FaRedoAlt size={14} /></Tool>
              <ToolSep $ml={4} />
              <Tool $ml={4} $off><FaRegObjectGroup size={16} /></Tool>
              <Tool $ml={5}><FaLock size={15} /></Tool>
              <Tool $ml={4}><svg width="16" height="15" viewBox="0 0 16 15"><path d="M0 0h9v2.500H5.500v8.500H0z" fill="#555" /><rect x="6.700" y="4" width="8.800" height="10.500" fill="#555" /></svg></Tool>
              <ToolSep $ml={6} />
              <Tool $ml={2}><ChevronsUp size={29} strokeWidth={2} /></Tool>
              <Tool $ml={5}><ChevronUp size={29} strokeWidth={2} /></Tool>
              <Tool $ml={5}><ChevronDown size={29} strokeWidth={2} /></Tool>
              <Tool $ml={4}><ChevronsDown size={29} strokeWidth={2} /></Tool>
              <ToolSep $ml={3} />
              <Tool $ml={2}><svg width="12" height="15" viewBox="0 0 12 15" fill="none" stroke="#555" strokeWidth="1.300"><path d="M0 2.800h12M4 2.500V.8h4v1.700M1.500 3v10.800h9V3M4 5v7M6 5v7M8 5v7" /></svg></Tool>
              <ToolSep $ml={2} />
              <Txt $size={12} $ml={7} $ls={-0.2} $color="#444">Dark Quarterly Market...</Txt>
              <Tool $ml={6} $off><FaRegEdit size={14} /></Tool>
              <Txt $size={10} $ml={4} $ls={-0.1} $color="#666">Last Saved: 9:39am</Txt>
            </BTools>
            <BActions><Settings size={18} color={INK} strokeWidth={2} /><DownloadIcon s={18} w={1.500} /></BActions>
          </BToolbar>
          <BCanvas>
            <BPage>
              <MapLayer $x={53} $y={35} width="460" height="390" viewBox="0 0 1380 1170"><CanadaShape /></MapLayer>
              <OldSelection>{GRID.map(([x, y]) => <OldHandle key={x + y} $x={x} $y={y} />)}</OldSelection>
            </BPage>
          </BCanvas>
        </BWork>
      </BBody>
    </BMain>
    <BPanel>
      <PanelTop><Pill $w={77} $h={25} $bg="#8d8d8d">CANCEL</Pill><Pill $w={74} $h={29} $bg="#5bbf4d">SAVE</Pill></PanelTop>
      <PanelTabs><PanelTab>DATA</PanelTab><PanelTab $on>SETTINGS</PanelTab></PanelTabs>
      <ToggleList>
        {[["SHOW TITLE", 0], ["SHOW LEGEND", 1], ["SHOW LABELS", 0]].map(([t, on]) => (
          <ToggleRow key={t}><RowName>{t}</RowName><Caret /><Switch $on={on}><i /></Switch></ToggleRow>
        ))}
      </ToggleList>
      <PanelForm>
        <PanelLabel>MAP TYPE</PanelLabel>
        <Radios><Radio $on><i />STANDARD</Radio><Radio><i />BUBBLE</Radio></Radios>
        {SWATCHES.map(([t, bg, c], i) => (
          <React.Fragment key={t}><PanelLabel $mt={i ? 20 : 27}>{t}</PanelLabel><Swatch $bg={bg}><Droplet c={c} /></Swatch></React.Fragment>
        ))}
        <PanelLabel $mt={20}>BORDER WIDTH</PanelLabel>
        <WidthRow><WidthInput>1</WidthInput><GreenRail><i /></GreenRail></WidthRow>
        <PanelLabel $mt={20}>BACKGROUND COLOR</PanelLabel>
        <Swatch $checker $bg="#fff conic-gradient(#fff 25%, #bfbfbf 0 50%, #fff 0 75%, #bfbfbf 0)"><Droplet c="rgba(0,0,0,.5)" /></Swatch>
      </PanelForm>
    </BPanel>
  </Frame>
);

const After = () => (
  <Frame $column>
    <AHeader>
      <Ico $ml={22}><ChevronLeft size={20} strokeWidth={1.700} /></Ico>
      <Sep $ml={18} />
      <Txt $ml={23} $size={14} $weight={500}>File</Txt>
      <TitleInput><Txt $size={8} $color="#7a7a80">Title</Txt><Txt $size={12.5} $ml={8}>4 Kinds of Employee Separation</Txt></TitleInput>
      <Ico $ml={273}><Undo2 size={18} strokeWidth={1.900} /></Ico>
      <Ico $ml={22} $color="#a5a5aa"><Redo2 size={18} strokeWidth={1.700} /></Ico>
      <SavedChip><CircleCheck size={16} strokeWidth={1.600} color={INK} /><Txt $size={12.2} $ml={8} $color="#3a3a44">Saved</Txt></SavedChip>
      <Ico $ml={18}><MessageCircle size={20} strokeWidth={1.700} /></Ico>
      <Ico $ml={24}>
        <svg width="20" height="20" viewBox="0 0 20 20" fill="none" stroke={INK} strokeWidth="1.400" strokeLinecap="round" strokeLinejoin="round">
          <circle cx="10" cy="10" r="8.700" /><circle cx="10" cy="5.300" r="0.900" fill={INK} /><path d="M6 8.200l3 .7v2.600l-1.500 4M14 8.200l-3 .7v2.600l1.500 4M9 11.500h2" />
        </svg>
      </Ico>
      <Sep $ml={18} />
      <Ico $ml={18}><DownloadIcon s={18} w={1.500} /></Ico>
      <Button $ml={19} $w={63} $bg="#008573">Share</Button>
      <Button $ml={12} $w={82} $bg="#0073e6">Upgrade</Button>
      <Avatar>AB</Avatar>
    </AHeader>
    <ABody>
      <ASidebar>{NAV.map(([t, icon]) => <NavItem key={t}>{icon}<span>{t}</span></NavItem>)}</ASidebar>
      <AWork>
        <AToolbar>
          <Txt $size={12} $weight={500} $ml={24}>Edit map</Txt>
          <Sep $ml={17} />
          <Txt $size={12} $weight={500} $ml={15}>Alt text</Txt>
          <Txt $size={12} $weight={500} $ml={515}>Layer</Txt>
          <Sep $ml={17} />
          <Txt $size={12} $weight={500} $ml={15}>Align</Txt>
          <Sep $ml={16} />
          <Txt $size={12} $weight={500} $ml={15}>Group</Txt>
          <Sep $ml={17} />
          <Ico $ml={13}><LockOpen size={18} strokeWidth={1.700} /></Ico>
          <Ico $ml={22}><Copy size={18} strokeWidth={1.700} /></Ico>
          <Ico $ml={22}><Trash2 size={18} strokeWidth={1.700} /></Ico>
        </AToolbar>
        <ACanvas>
          <APage>
            <UsaMap />
            <NewSelection>
              {GRID.map(([x, y]) => {
                const mx = x === "50%", my = y === "50%";
                return <NewHandle key={x + y} $x={x} $y={y} $w={mx ? 22 : my ? 10 : 16} $h={mx ? 10 : my ? 22 : 16} />;
              })}
            </NewSelection>
          </APage>
          <ZoomBox><Minus size={16} /><span>100%</span><Plus size={16} /></ZoomBox>
        </ACanvas>
      </AWork>
      <APanel>
        <PanelTitle><Txt $size={16} $weight={500}>Edit Chart</Txt><X size={16} strokeWidth={2} color={INK} /></PanelTitle>
        <Tabs><Tab>Data</Tab><Tab $on>Setup</Tab></Tabs>
        <PanelBody>
          <Card>
            <Section $pb={15}>
              <CardHead $h={48}><Txt $weight={600} $size={14}>Map Style</Txt><ChevronUp size={20} strokeWidth={1.700} /></CardHead>
              <Field $h={32} $mt={4}>Scale type<Segments><Segment>Gradient</Segment><Segment $on>Steps</Segment></Segments></Field>
            </Section>
            <Section $pb={19}>
              <Field $h={50}>Color palette</Field>
              <Colors w={322} h={32} m="5px 0 0 1px" list={RAMP} />
              <Field $h={28} $mt={20}>Number of steps<Box $w={56} $h={28}>5<ChevronDown size={14} strokeWidth={1.800} /></Box></Field>
              <Field $h={20} $mt={16}>Customize range<GreySwitch><i /></GreySwitch></Field>
              <Field $h={20} $mt={16}>Color Presets</Field>
              {PRESETS.map(([t, list], i) => (
                <Field key={t} $h={24} $mt={i ? 16 : 12} $size={12.500} $pad={4}>{t}<Colors w={188} h={24} list={list} /></Field>
              ))}
            </Section>
            <Section $pb={15}>
              <Field $h={24} $mt={15}>Border color<Box $w={24} $h={24} /></Field>
              <Field $h={24} $mt={16}>Border width<SliderRow><Rail><i /></Rail><Box $w={48} $h={24} $size={12}>1</Box></SliderRow></Field>
            </Section>
            <Section>
              <Field $h={24} $mt={15}>No data color<Box $w={24} $h={24} $bg="#f3f3f3" /></Field>
              <Field $h={24} $mt={16}>Hover effect color<InfoRing /><Box $w={24} $h={24} $bg="#e07b00" /></Field>
            </Section>
          </Card>
        </PanelBody>
      </APanel>
    </ABody>
  </Frame>
);

export default function App() {
  return (
    <>
      <Global />
      <Board>
        <Column><Heading $pad="50px 0 0 641px">BEFORE</Heading><Before /></Column>
        <Column><Heading $pad="51px 0 0 677px">AFTER</Heading><After /></Column>
      </Board>
    </>
  );
}
